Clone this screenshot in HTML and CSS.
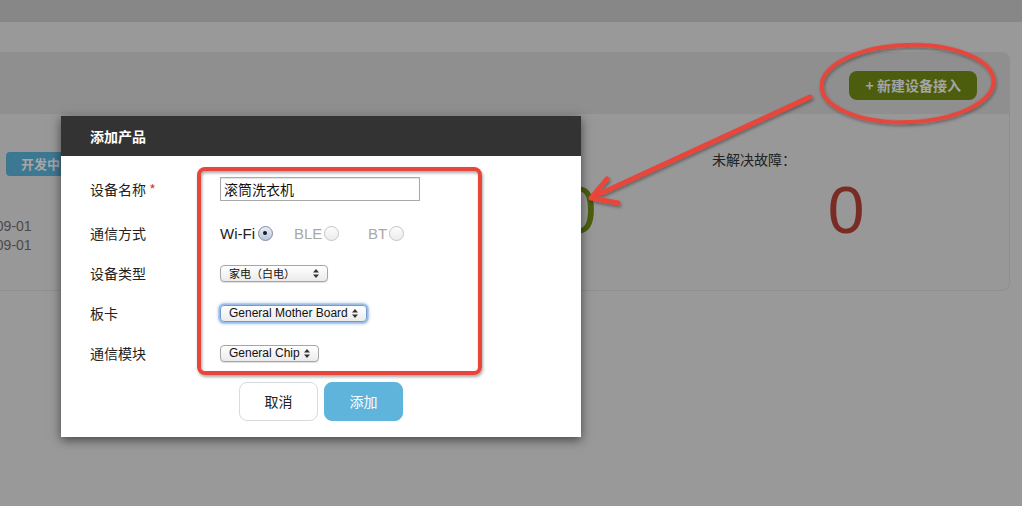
FILE: index.html
```html
<!DOCTYPE html>
<html lang="zh-CN">
<head>
<meta charset="utf-8">
<title>添加产品</title>
<link rel="stylesheet" href="styles.css">
</head>
<body>
<div class="page">
  <div class="topbar"></div>
  <main class="content">
    <section class="panel">
      <div class="panel-head">
        <button class="btn-new">+ 新建设备接入</button>
      </div>
      <div class="panel-body">
        <div class="info">
          <span class="badge">开发中</span>
          <div class="dates">
            <div>2015-09-01</div>
            <div>2015-09-01</div>
          </div>
        </div>
        <div class="stat">
          <div class="stat-label">累计激活设备总数量：</div>
          <div class="stat-num green">0</div>
        </div>
        <div class="stat">
          <div class="stat-label">未解决故障：</div>
          <div class="stat-num red">0</div>
        </div>
      </div>
    </section>
  </main>

  <div class="modal">
    <div class="modal-head">添加产品</div>
    <div class="modal-body">
      <div class="row first">
        <label class="label">设备名称 <span class="req">*</span></label>
        <div class="input">滚筒洗衣机</div>
      </div>
      <div class="row">
        <label class="label">通信方式</label>
        <div class="radios">
          <span class="opt">Wi-Fi<span class="radio checked"></span></span>
          <span class="opt off">BLE<span class="radio"></span></span>
          <span class="opt off">BT<span class="radio"></span></span>
        </div>
      </div>
      <div class="row">
        <label class="label">设备类型</label>
        <div class="select w1"><span>家电（白电）</span><svg class="arr" width="6" height="9" viewBox="0 0 6 9"><path d="M3 0 L6 3.4 L0 3.4 Z M0 5.6 L6 5.6 L3 9 Z" fill="#333"/></svg></div>
      </div>
      <div class="row">
        <label class="label">板卡</label>
        <div class="select w2 focus"><span>General Mother Board</span><svg class="arr" width="6" height="9" viewBox="0 0 6 9"><path d="M3 0 L6 3.4 L0 3.4 Z M0 5.6 L6 5.6 L3 9 Z" fill="#333"/></svg></div>
      </div>
      <div class="row">
        <label class="label">通信模块</label>
        <div class="select w3"><span>General Chip</span><svg class="arr" width="6" height="9" viewBox="0 0 6 9"><path d="M3 0 L6 3.4 L0 3.4 Z M0 5.6 L6 5.6 L3 9 Z" fill="#333"/></svg></div>
      </div>
    </div>
    <div class="modal-foot">
      <button class="btn cancel">取消</button>
      <button class="btn add">添加</button>
    </div>
  </div>

  <svg class="marks" width="1022" height="506" viewBox="0 0 1022 506">
    <defs>
      <filter id="sh" x="-10%" y="-10%" width="120%" height="130%">
        <feDropShadow dx="1" dy="2" stdDeviation="1.5" flood-color="#000" flood-opacity="0.35"/>
      </filter>
    </defs>
    <g fill="none" stroke="#e8443a" stroke-linecap="round" stroke-linejoin="round" filter="url(#sh)">
      <rect x="199" y="169" width="281" height="204" rx="6" stroke-width="4"/>
      <ellipse cx="907.5" cy="83.5" rx="86" ry="38.5" stroke-width="4" transform="rotate(-2 907.5 83.5)"/>
      <path d="M810 97 L593 197" stroke-width="5"/>
      <path d="M607 179 L591 198 L618 203" stroke-width="5"/>
    </g>
  </svg>
</div>
</body>
</html>
```

FILE: styles.css
```css
* { box-sizing: border-box; }

html, body {
  margin: 0;
  padding: 0;
}

body {
  background: #999999;
  font-family: "Liberation Sans", "Noto Sans CJK SC", sans-serif;
  font-size: 14px;
  color: #222;
}

.page {
  position: relative;
  width: 1022px;
  height: 506px;
  overflow: hidden;
}

.topbar {
  height: 22px;
  background: #878787;
}

.content {
  padding: 30px 12px 0 0;
}

.panel {
  background: #989898;
  border: 1px solid #8e8e8e;
  border-left: none;
  border-radius: 0 8px 8px 0;
}

.panel-head {
  height: 61px;
  background: #8f8f8f;
  display: flex;
  justify-content: flex-end;
  align-items: center;
  padding: 3px 32px 0 0;
  border-radius: 0 8px 0 0;
}

.btn-new {
  height: 29px;
  padding: 0 16px 0 17px;
  border: none;
  border-radius: 8px;
  background: #4d5d0e;
  color: #a4a4a4;
  font-family: "Noto Sans CJK SC", sans-serif;
  font-size: 14px;
  font-weight: 700;
  line-height: 29px;
}

.panel-body {
  height: 176px;
  display: flex;
  padding-top: 35px;
}

.info {
  width: 444px;
  padding-top: 3px;
}

.badge {
  display: inline-block;
  margin-left: 6px;
  width: 70px;
  height: 24px;
  padding-left: 15px;
  border-radius: 4px;
  background: #3d7893;
  color: #a6a6a6;
  font-family: "Noto Sans CJK SC", sans-serif;
  font-size: 13px;
  font-weight: 700;
  line-height: 24px;
}

.dates {
  margin: 41px 0 0 -40px;
  color: #4a4a4a;
  font-size: 14px;
  line-height: 19px;
}

.stat {
  width: 268px;
}

.stat-label {
  font-family: "Noto Sans CJK SC", sans-serif;
  font-size: 14px;
  line-height: 20px;
  color: #222;
}

.stat-num {
  margin-top: 8px;
  text-align: center;
  font-size: 66px;
  line-height: 66px;
}

.stat-num.green { color: #4b5f0e; }
.stat-num.red { color: #782c23; }

/* modal */
.modal {
  position: absolute;
  left: 61px;
  top: 116px;
  width: 520px;
  height: 321px;
  background: #fff;
  box-shadow: 0 3px 10px rgba(0, 0, 0, 0.55);
}

.modal-head {
  height: 40px;
  background: #333333;
  color: #fff;
  padding-left: 29px;
  font-family: "Noto Sans CJK SC", sans-serif;
  font-size: 14px;
  font-weight: 700;
  line-height: 41px;
}

.modal-body {
  padding: 13px 0 0 29px;
}

.row {
  display: flex;
  align-items: center;
  height: 40px;
}

.row.first {
  margin-bottom: 4px;
}

.label {
  width: 130px;
  font-family: "Noto Sans CJK SC", sans-serif;
  font-size: 14px;
  color: #222;
}

.req {
  color: #d9382c;
}

.input {
  width: 200px;
  height: 24px;
  border: 1px solid #a9a9a9;
  box-shadow: inset 0 1px 1px rgba(0, 0, 0, 0.12);
  padding-left: 3px;
  font-family: "Noto Sans CJK SC", sans-serif;
  font-size: 14px;
  line-height: 22px;
  color: #111;
}

.radios {
  display: flex;
}

.opt {
  width: 74px;
  display: flex;
  align-items: center;
  font-size: 15px;
  color: #222;
}

.opt.off {
  color: #a8a8a8;
}

.radio {
  width: 15px;
  height: 15px;
  margin-left: 3px;
  border-radius: 50%;
  border: 1px solid #a0a0a0;
  background: linear-gradient(#fafafa, #dcdcdc);
  position: relative;
}

.opt.off .radio {
  border-color: #c4c4c4;
  background: linear-gradient(#fdfdfd, #ececec);
  margin-left: 2px;
}

.radio.checked {
  border-color: #7e8da3;
  background: linear-gradient(#e9eef6, #b9c7dc);
}

.radio.checked::after {
  content: "";
  position: absolute;
  left: 4.5px;
  top: 4.5px;
  width: 4px;
  height: 4px;
  border-radius: 50%;
  background: #1a1a1a;
}

.select {
  height: 17px;
  display: flex;
  align-items: center;
  justify-content: space-between;
  padding: 0 8px 0 8px;
  border: 1px solid #a6a6a6;
  border-radius: 4px;
  background: linear-gradient(#ffffff, #ebebeb);
  box-shadow: 0 1px 1px rgba(0, 0, 0, 0.12);
  font-size: 12px;
  color: #111;
  white-space: nowrap;
}

.select span {
  line-height: 15px;
}

.select.w1 {
  width: 108px;
  font-family: "Noto Sans CJK SC", sans-serif;
  font-size: 11px;
}

.select.w2 { width: 147px; }
.select.w3 { width: 99px; }

.select.focus {
  border-color: #6f9bd2;
  box-shadow: 0 0 0 1.5px #9dbde6, 0 0 3px 2px rgba(90, 140, 210, 0.45);
}

.arr {
  flex: none;
}

.modal-foot {
  display: flex;
  justify-content: center;
  gap: 6px;
  margin-top: 9px;
}

.btn {
  width: 79px;
  height: 39px;
  border-radius: 8px;
  font-family: "Noto Sans CJK SC", sans-serif;
  font-size: 14px;
  line-height: 37px;
  padding: 0;
}

.btn.cancel {
  background: #fff;
  border: 1px solid #dadada;
  color: #222;
}

.btn.add {
  background: #5fb4dc;
  border: 1px solid #5fb4dc;
  color: #fff;
}

.marks {
  position: absolute;
  left: 0;
  top: 0;
  pointer-events: none;
}
```
